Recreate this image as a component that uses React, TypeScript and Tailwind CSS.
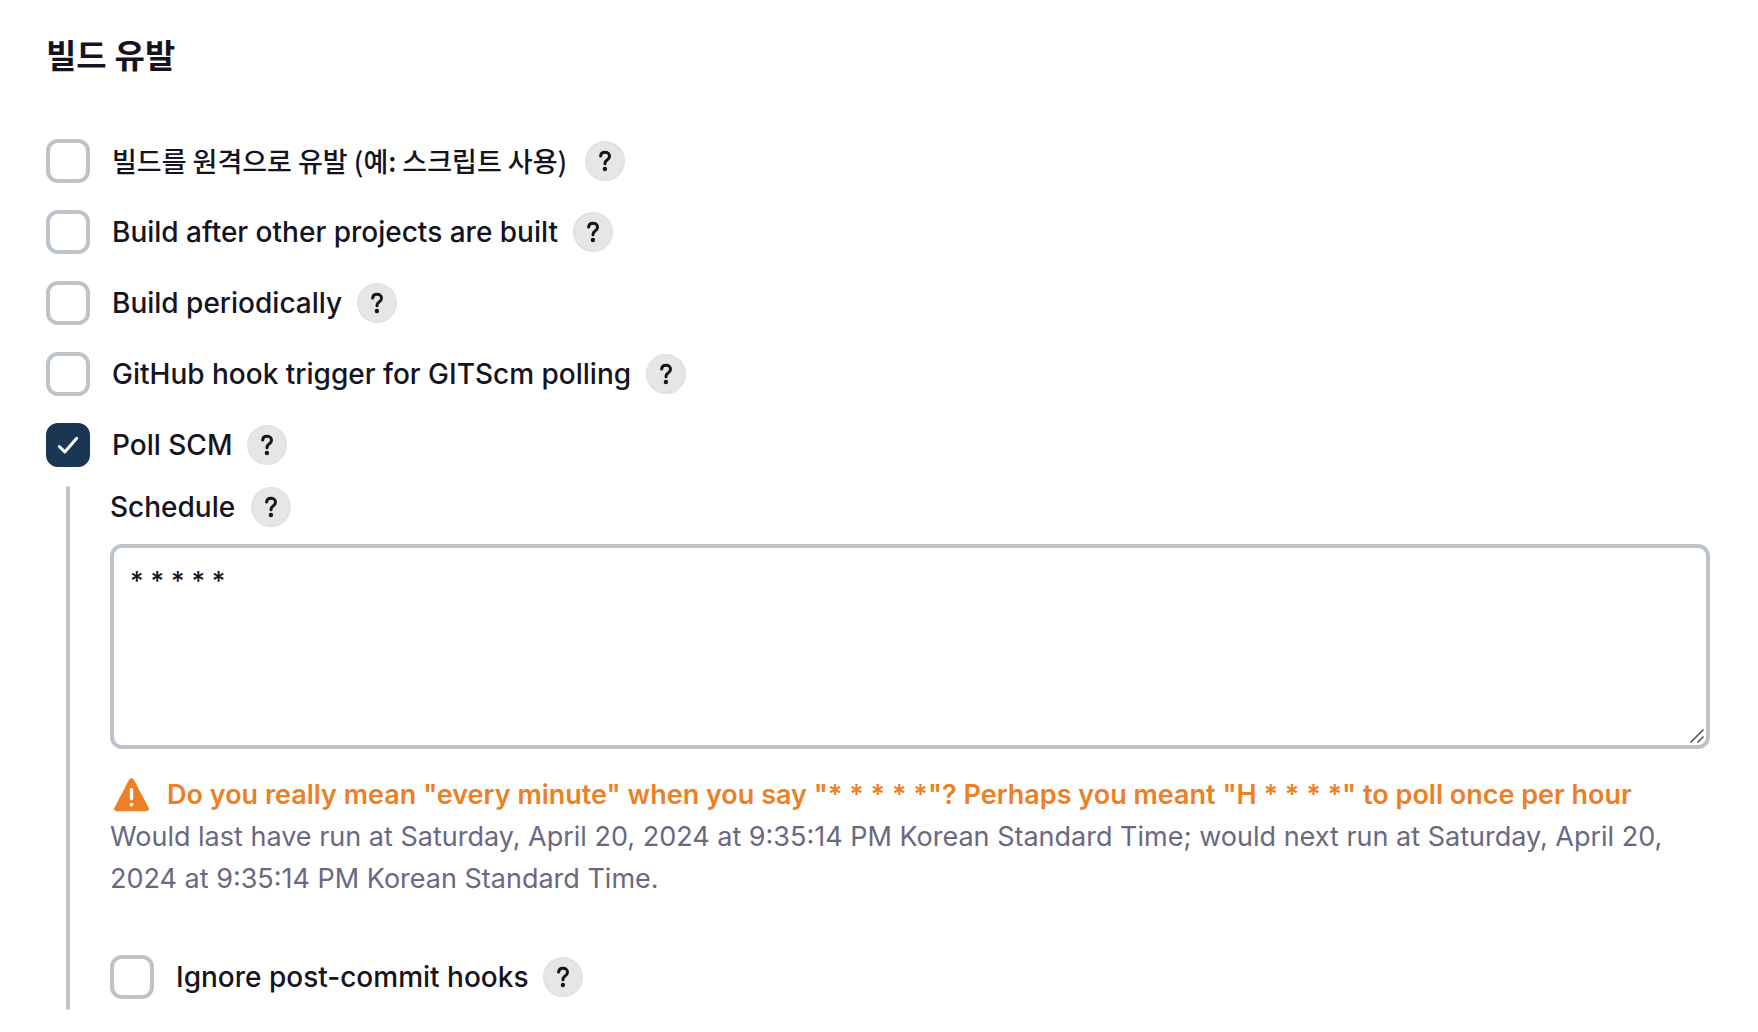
import { useState } from "react";

interface Trigger {
  id: string;
  label: string;
  korean?: boolean;
}

const TRIGGERS: Trigger[] = [
  { id: "remote", label: "빌드를 원격으로 유발 (예: 스크립트 사용)", korean: true },
  { id: "upstream", label: "Build after other projects are built" },
  { id: "timer", label: "Build periodically" },
  { id: "github", label: "GitHub hook trigger for GITScm polling" },
  { id: "scm", label: "Poll SCM" },
];

function HelpButton({ topic }: { topic: string }) {
  return (
    <button
      type="button"
      aria-label={`Help for feature: ${topic}`}
      className="flex size-10 shrink-0 items-center justify-center rounded-full border-2 border-[#e2e2e2] bg-[#e6e6e6]"
    >
      <svg width="14" height="22" viewBox="0 0 14 22" fill="none" aria-hidden="true">
        <path
          d="M2.6 6.1C2.8 3.7 4.5 2.3 7 2.3c2.6 0 4.5 1.5 4.5 3.9 0 1.8-.9 2.8-2.4 3.8C7.6 11 7 11.7 7 13.4v.3"
          stroke="#14141f"
          strokeWidth="3"
          strokeLinecap="round"
          strokeLinejoin="round"
        />
        <circle cx="6.9" cy="19" r="2.2" fill="#14141f" />
      </svg>
    </button>
  );
}

interface CheckRowProps {
  id: string;
  label: string;
  korean?: boolean;
  checked: boolean;
  onChange: (checked: boolean) => void;
}

function CheckRow({ id, label, korean, checked, onChange }: CheckRowProps) {
  return (
    <div className="flex items-center">
      <span className="relative flex size-11 shrink-0">
        <input
          id={id}
          type="checkbox"
          checked={checked}
          onChange={(e) => onChange(e.target.checked)}
          className="size-11 appearance-none rounded-xl border-4 border-[#bcc4ca] bg-white checked:border-[#1a3652] checked:bg-[#1a3652]"
        />
        {checked && (
          <svg className="pointer-events-none absolute inset-0" width="44" height="44" viewBox="0 0 44 44" fill="none" aria-hidden="true">
            <path d="M13.3 23.5l5.5 5.4L30.7 15.3" stroke="#fff" strokeWidth="3" strokeLinecap="round" strokeLinejoin="round" />
          </svg>
        )}
      </span>
      <label
        htmlFor={id}
        className={`pl-[22px] leading-[44px] font-medium ${korean ? "pr-[18px] font-['Noto_Sans_CJK_KR',sans-serif] text-[27px]" : "pr-[15px] text-[28px]"}`}
      >
        {label}
      </label>
      <HelpButton topic={label} />
    </div>
  );
}

export default function App() {
  const [enabled, setEnabled] = useState<Record<string, boolean>>({ scm: true });
  const [schedule, setSchedule] = useState("* * * * *");
  const [ignoreHooks, setIgnoreHooks] = useState(false);

  return (
    <main className="min-h-screen bg-white pt-8 pr-12 pb-5 pl-[46px] font-[Inter,'Noto_Sans_CJK_KR',sans-serif] text-[27px] text-[#14141f]">
      <h2 className="text-[33px] leading-[48px] font-bold">빌드 유발</h2>

      <div className="mt-[59px] flex flex-col gap-[27px]">
        {TRIGGERS.map((t) => (
          <CheckRow
            key={t.id}
            id={t.id}
            label={t.label}
            korean={t.korean}
            checked={!!enabled[t.id]}
            onChange={(checked) => setEnabled({ ...enabled, [t.id]: checked })}
          />
        ))}
      </div>

      {/* Poll SCM settings */}
      {enabled.scm && (
        <div className="mt-[19px] flex">
          <div className="mx-5 w-1 shrink-0 rounded-full bg-[#bcc4ca]" />
          <div className="min-w-0 flex-1 pb-[11px] pl-5">
            <div className="flex items-center gap-4">
              <label htmlFor="schedule" className="text-[28px] leading-[42px] font-medium">
                Schedule
              </label>
              <HelpButton topic="Schedule" />
            </div>
            <div className="relative mt-4">
              <textarea
                id="schedule"
                value={schedule}
                onChange={(e) => setSchedule(e.target.value)}
                className="block h-[205px] w-full resize-y rounded-xl border-4 border-[#bcc4ca] bg-white px-4 py-3 font-[Inter,sans-serif] text-[26px] leading-[42px] font-medium [&::-webkit-resizer]:bg-transparent"
              />
              <svg className="pointer-events-none absolute right-[5px] bottom-[5px]" width="16" height="16" viewBox="0 0 16 16" aria-hidden="true">
                <path d="M1.5 14.5l13-13M8.5 14.5l6-6" stroke="#555" strokeWidth="1.6" />
              </svg>
            </div>
            <div className="mt-[25px] flex items-center gap-[18px] text-[#ec8026]">
              <svg className="ml-1 shrink-0" width="35" height="34" viewBox="0 0 35 34" aria-hidden="true">
                <path d="M15.2 1.5a2.7 2.7 0 0 1 4.6 0L34.6 29.7a2.4 2.4 0 0 1-2.2 3.5H2.6a2.4 2.4 0 0 1-2.2-3.5z" fill="currentColor" />
                <path d="M17.5 11.8v8.7" stroke="#fff" strokeWidth="3.4" strokeLinecap="round" />
                <circle cx="17.5" cy="26.6" r="1.9" fill="#fff" />
              </svg>
              <p className="leading-[42px] font-semibold">
                Do you really mean "every minute" when you say "* * * * *"? Perhaps you meant "H * * * *" to poll once per hour
              </p>
            </div>
            <p className="leading-[42px] text-[#6a6880]">
              Would last have run at Saturday, April 20, 2024 at 9:35:14 PM Korean Standard Time; would next run at Saturday, April 20, 2024 at 9:35:14 PM Korean Standard Time.
            </p>
            <div className="mt-[55px]">
              <CheckRow id="ignore-hooks" label="Ignore post-commit hooks" checked={ignoreHooks} onChange={setIgnoreHooks} />
            </div>
          </div>
        </div>
      )}
    </main>
  );
}
